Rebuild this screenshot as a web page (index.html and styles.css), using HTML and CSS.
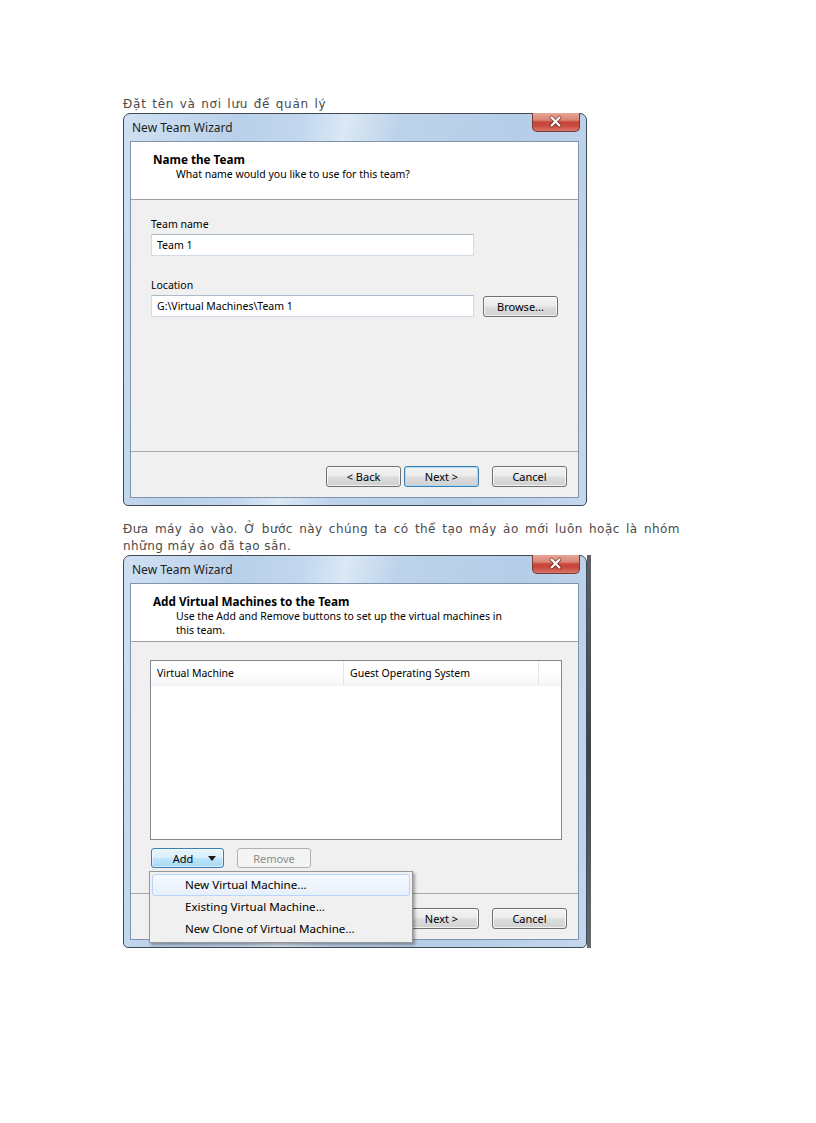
FILE: index.html
```html
<!DOCTYPE html>
<html lang="vi">
<head>
<meta charset="utf-8">
<title>New Team Wizard</title>
<link rel="stylesheet" href="styles.css">
</head>
<body>
<div class="doc">
  <p class="cap cap1">Đặt tên và nơi lưu để quản lý</p>
  <div class="shot">
    <div class="win">
      <div class="titlebar">
        <span class="title">New Team Wizard</span>
        <span class="close"><svg width="48" height="19" viewBox="0 0 48 19"><path d="M20 5.5 L28 13.5 M28 5.5 L20 13.5" stroke="#4a1a16" stroke-width="4.2" stroke-linecap="round" opacity="0.55"/><path d="M20 5.5 L28 13.5 M28 5.5 L20 13.5" stroke="#ffffff" stroke-width="2.2" stroke-linecap="round"/></svg></span>
      </div>
      <div class="client">
        <div class="head">
          <div class="h-title">Name the Team</div>
          <div class="h-sub">What name would you like to use for this team?</div>
        </div>
        <div class="body body-name">
          <div class="group">
            <div class="label">Team name</div>
            <div class="row"><div class="input">Team 1</div></div>
          </div>
          <div class="group group2">
            <div class="label">Location</div>
            <div class="row"><div class="input">G:\Virtual Machines\Team 1</div><span class="btn browse">Browse...</span></div>
          </div>
        </div>
        <div class="foot">
          <span class="btn">&lt; Back</span>
          <span class="btn default">Next &gt;</span>
          <span class="btn cancel">Cancel</span>
        </div>
      </div>
    </div>
  </div>

  <p class="cap cap2">Đưa máy ảo vào. Ở bước này chúng ta có thể tạo máy ảo mới luôn hoặc là nhóm những máy ảo đã tạo sẵn.</p>
  <div class="shot shot2">
    <div class="win">
      <div class="titlebar">
        <span class="title">New Team Wizard</span>
        <span class="close"><svg width="48" height="19" viewBox="0 0 48 19"><path d="M20 5.5 L28 13.5 M28 5.5 L20 13.5" stroke="#4a1a16" stroke-width="4.2" stroke-linecap="round" opacity="0.55"/><path d="M20 5.5 L28 13.5 M28 5.5 L20 13.5" stroke="#ffffff" stroke-width="2.2" stroke-linecap="round"/></svg></span>
      </div>
      <div class="client">
        <div class="head">
          <div class="h-title">Add Virtual Machines to the Team</div>
          <div class="h-sub">Use the Add and Remove buttons to set up the virtual machines in<br>this team.</div>
        </div>
        <div class="body body-vms">
          <div class="table">
            <div class="thead">
              <div class="th th1">Virtual Machine</div>
              <div class="th th2">Guest Operating System</div>
              <div class="th th3"></div>
            </div>
          </div>
          <div class="vm-actions">
            <div class="add-wrap">
              <span class="btn add">Add<svg class="caret" width="8" height="5" viewBox="0 0 8 5"><path d="M0 0 H8 L4 5 Z" fill="#1a1a1a"/></svg></span>
              <div class="menu">
                <div class="mi hot">New Virtual Machine...</div>
                <div class="mi">Existing Virtual Machine...</div>
                <div class="mi">New Clone of Virtual Machine...</div>
              </div>
            </div>
            <span class="btn disabled">Remove</span>
          </div>
        </div>
        <div class="foot">
          <span class="btn covered">&lt; Back</span>
          <span class="btn">Next &gt;</span>
          <span class="btn cancel">Cancel</span>
        </div>
      </div>
    </div>
    <div class="behind"></div>
  </div>
</div>
</body>
</html>
```

FILE: styles.css
```css
html, body {
  margin: 0;
  padding: 0;
  background: #ffffff;
}

.doc {
  padding: 96px 0 0 123px;
  width: 557px;
}

.cap {
  margin: 0;
  font-family: "DejaVu Sans", Verdana, sans-serif;
  font-size: 12px;
  line-height: 17px;
  color: #4a4a4a;
}

.cap1 {
  height: 17px;
  letter-spacing: 0.75px;
  word-spacing: 1px;
}

.cap2 {
  margin-top: 15px;
  text-align: justify;
  letter-spacing: 0.45px;
}

.shot {
  display: flex;
  align-items: flex-start;
}

.win {
  box-sizing: border-box;
  width: 464px;
  height: 393px;
  display: flex;
  flex-direction: column;
  padding: 0 7px 7px 6px;
  border: 1px solid #3f4a55;
  border-radius: 7px 7px 5px 5px;
  background: linear-gradient(100deg, #cfe0f2 0%, #b9d0ea 22%, #c2d7ee 34%, #dbe8f5 42%, #bdd3eb 52%, #b6cde8 75%, #c3d7ed 100%);
  font-family: "Noto Sans", "Open Sans", sans-serif;
  font-size: 10.5px;
  color: #000;
}

.titlebar {
  height: 27px;
  flex: none;
  display: flex;
  align-items: center;
  justify-content: space-between;
  padding-left: 2px;
}

.title {
  font-size: 12px;
  color: #1e1e1e;
}

.close {
  align-self: flex-start;
  margin-top: -1px;
  margin-right: -1px;
  width: 48px;
  height: 19px;
  box-sizing: border-box;
  border: 1px solid #7a3b35;
  border-top: none;
  border-radius: 0 0 5px 5px;
  background: linear-gradient(180deg, #e6a597 0%, #d98474 40%, #c6463a 50%, #c9493d 70%, #d8786a 100%);
  display: flex;
  overflow: hidden;
}

.close svg {
  display: block;
  margin: -1px 0 0 -1px;
}

.client {
  flex: 1;
  display: flex;
  flex-direction: column;
  border: 1px solid #8095ad;
  background: #f0f0f0;
}

.head {
  height: 58px;
  flex: none;
  box-sizing: border-box;
  background: #ffffff;
  border-bottom: 1px solid #a0a0a0;
  padding: 10px 0 0 22px;
  line-height: 15px;
}

.h-title {
  font-weight: bold;
  font-size: 11.7px;
}

.h-sub {
  padding-left: 23px;
  line-height: 14px;
}

.body {
  flex: 1;
}

.body-name {
  padding: 17px 0 0 20px;
}

.label {
  line-height: 15px;
  margin-bottom: 2px;
}

.group2 {
  margin-top: 22px;
}

.row {
  display: flex;
  align-items: center;
  gap: 9px;
}

.input {
  box-sizing: border-box;
  width: 323px;
  height: 22px;
  padding-left: 5px;
  line-height: 20px;
  background: #ffffff;
  border: 1px solid #cfdbe7;
  border-top-color: #abb9c9;
}

.btn {
  box-sizing: border-box;
  display: inline-flex;
  align-items: center;
  justify-content: center;
  width: 75px;
  height: 21px;
  border: 1px solid #707070;
  border-radius: 3px;
  background: linear-gradient(180deg, #f3f3f3 0%, #ebebeb 48%, #dddddd 52%, #d0d0d0 100%);
  box-shadow: inset 0 0 0 1px rgba(255, 255, 255, 0.7);
  color: #000;
  font-size: 11px;
}

.btn.default {
  border-color: #3c7fb1;
  box-shadow: inset 0 0 0 1px #a7dbf6;
}

.btn.covered {
  visibility: hidden;
}

.foot {
  height: 46px;
  flex: none;
  box-sizing: border-box;
  border-top: 1px solid #a8a8a8;
  display: flex;
  justify-content: flex-end;
  align-items: flex-start;
  padding: 14px 11px 0 0;
  gap: 3px;
}

.foot .cancel {
  margin-left: 10px;
}

.body-vms {
  padding: 18px 0 0 19px;
}

.table {
  box-sizing: border-box;
  width: 412px;
  height: 180px;
  border: 1px solid #828790;
  background: #ffffff;
}

.thead {
  display: flex;
  height: 24px;
  background: linear-gradient(180deg, #ffffff 0%, #ffffff 50%, #f4f6f8 100%);
  border-bottom: 1px solid #eef0f3;
}

.th {
  box-sizing: border-box;
  padding-left: 6px;
  line-height: 24px;
  border-right: 1px solid #e3e5e8;
}

.th1 {
  width: 193px;
}

.th2 {
  width: 195px;
}

.th3 {
  flex: 1;
  border-right: none;
}

.vm-actions {
  display: flex;
  gap: 13px;
  margin: 8px 0 0 1px;
}

.add-wrap {
  position: relative;
}

.btn.add {
  width: 73px;
  height: 20px;
  gap: 15px;
  padding-left: 14px;
  border-color: #3c7fb1;
  background: linear-gradient(180deg, #e8f5fd 0%, #d9f0fc 48%, #bee6fd 52%, #a7d9f5 100%);
  box-shadow: inset 0 0 0 1px rgba(255, 255, 255, 0.5);
}

.caret {
  display: block;
}

.btn.disabled {
  width: 74px;
  height: 20px;
  border-color: #adb2b5;
  background: #f4f4f4;
  box-shadow: none;
  color: #8d8d8d;
}

.menu {
  position: absolute;
  left: -2px;
  top: 23px;
  width: 264px;
  box-sizing: border-box;
  padding: 2px;
  border: 1px solid #979797;
  background: #f0f0f0;
  box-shadow: 2px 2px 3px rgba(0, 0, 0, 0.35);
  z-index: 5;
}

.mi {
  box-sizing: border-box;
  height: 22px;
  line-height: 20px;
  padding-left: 32px;
  border: 1px solid transparent;
  border-radius: 3px;
  font-size: 11.6px;
  white-space: nowrap;
}

.mi.hot {
  border-color: #b8d6fb;
  background: linear-gradient(180deg, #f5f9fe 0%, #e6f0fb 100%);
}

.behind {
  width: 4px;
  height: 393px;
  background: linear-gradient(180deg, #5d6064 0%, #3f4246 50%, #66696d 100%);
}
```
